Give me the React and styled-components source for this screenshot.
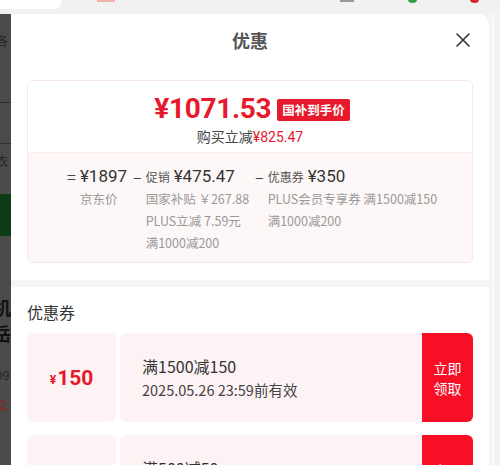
import styled, { createGlobalStyle } from "styled-components";

const RED = "#e8192c";

const GlobalStyle = createGlobalStyle`
  html, body {
    margin: 0;
    padding: 0;
    background: #f1f1f1;
    font-family: "Noto Sans CJK SC", "Noto Sans", sans-serif;
  }
`;

export default function App() {
  return (
    <>
      <GlobalStyle />
      <Page>
        <TopBar>
          <Pill />
          <TopMark $x={97} $w={18} $color="#f4b3a8" />
          <TopMark $x={340} $w={14} $color="#9a9a9a" />
          <TopDot $x={408} $color="#2f9e48" />
          <TopDot $x={470} $color="#d7262a" />
        </TopBar>
        <Body>
          <SideStrip>
            <SideText $h={88} $pad={20}>各</SideText>
            <SideLine />
            <SideSpacer $h={40} />
            <SideLine />
            <SideText $h={50} $pad={10}>衣</SideText>
            <GreenBlock />
            <SideSpacer $h={58} />
            <SideBig>机</SideBig>
            <SideBig>岳</SideBig>
            <SideText $h={50} $pad={22}>99</SideText>
            <SideText $h={30} $pad={2} $red>立</SideText>
          </SideStrip>
          <Modal>
            <Header>
              <Title>优惠</Title>
              <Close aria-label="关闭">
                <svg width="16" height="16" viewBox="0 0 16 16">
                  <path d="M2 2 L14 14 M14 2 L2 14" stroke="#333" strokeWidth="1.6" strokeLinecap="round" />
                </svg>
              </Close>
            </Header>
            <PriceCard>
              <PriceTop>
                <PriceRow>
                  <BigPrice>¥1071.53</BigPrice>
                  <Badge>国补到手价</Badge>
                </PriceRow>
                <SaveLine>
                  购买立减<span>¥825.47</span>
                </SaveLine>
              </PriceTop>
              <Breakdown>
                <Term>
                  <Op>=</Op>
                  <TermBody>
                    <TermHead>
                      <Amount>¥1897</Amount>
                    </TermHead>
                    <Sub>京东价</Sub>
                  </TermBody>
                </Term>
                <Term>
                  <Op>–</Op>
                  <TermBody>
                    <TermHead>
                      <Label>促销</Label>
                      <Amount>¥475.47</Amount>
                    </TermHead>
                    <Sub>国家补贴 ￥267.88</Sub>
                    <Sub>PLUS立减 7.59元</Sub>
                    <Sub>满1000减200</Sub>
                  </TermBody>
                </Term>
                <Term>
                  <Op>–</Op>
                  <TermBody>
                    <TermHead>
                      <Label>优惠券</Label>
                      <Amount>¥350</Amount>
                    </TermHead>
                    <Sub>PLUS会员专享券 满1500减150</Sub>
                    <Sub>满1000减200</Sub>
                  </TermBody>
                </Term>
              </Breakdown>
            </PriceCard>
            <Divider />
            <SectionTitle>优惠券</SectionTitle>
            <CouponList>
              <Coupon>
                <CouponValue>
                  <small>¥</small>150
                </CouponValue>
                <CouponInfo>
                  <CouponName>满1500减150</CouponName>
                  <CouponDate>2025.05.26 23:59前有效</CouponDate>
                </CouponInfo>
                <Claim>
                  立即
                  <br />
                  领取
                </Claim>
              </Coupon>
              <Coupon>
                <CouponValue>
                  <small>¥</small>50
                </CouponValue>
                <CouponInfo>
                  <CouponName>满500减50</CouponName>
                  <CouponDate>2025.05.26 23:59前有效</CouponDate>
                </CouponInfo>
                <Claim>
                  立即
                  <br />
                  领取
                </Claim>
              </Coupon>
            </CouponList>
          </Modal>
          <RightGutter>
            <GutterLine />
          </RightGutter>
        </Body>
      </Page>
    </>
  );
}

const Page = styled.div`
  width: 500px;
  height: 465px;
  overflow: hidden;
  display: flex;
  flex-direction: column;
  background: #f1f1f1;
`;

const TopBar = styled.div`
  position: relative;
  height: 14px;
  flex-shrink: 0;
  background: #f1f1f1;
`;

const Pill = styled.div`
  width: 62px;
  height: 9px;
  background: #fff;
  border-bottom-right-radius: 9px;
`;

const TopMark = styled.div`
  position: absolute;
  top: 0;
  left: ${(p) => p.$x}px;
  width: ${(p) => p.$w}px;
  height: 2px;
  background: ${(p) => p.$color};
`;

const TopDot = styled.div`
  position: absolute;
  top: -4px;
  left: ${(p) => p.$x}px;
  width: 9px;
  height: 7px;
  border-radius: 50%;
  background: ${(p) => p.$color};
`;

const Body = styled.div`
  flex: 1;
  display: flex;
  min-height: 0;
`;

const SideStrip = styled.div`
  width: 11px;
  flex-shrink: 0;
  background: #4b4b4b;
  overflow: hidden;
`;

const SideText = styled.div`
  height: ${(p) => p.$h}px;
  padding-top: ${(p) => p.$pad}px;
  box-sizing: border-box;
  font-size: 12px;
  line-height: 14px;
  color: ${(p) => (p.$red ? "#8a2020" : "#222")};
  margin-left: -4px;
  white-space: nowrap;
`;

const SideLine = styled.div`
  height: 1px;
  background: #3a2a2a;
`;

const SideSpacer = styled.div`
  height: ${(p) => p.$h}px;
`;

const GreenBlock = styled.div`
  height: 42px;
  background: #0c3b15;
`;

const SideBig = styled.div`
  height: 26px;
  font-size: 18px;
  line-height: 26px;
  font-weight: 700;
  color: #111;
  margin-left: -7px;
`;

const Modal = styled.div`
  width: 478px;
  flex-shrink: 0;
  background: #fff;
  border-top-right-radius: 10px;
  overflow: hidden;
`;

const Header = styled.div`
  position: relative;
  height: 52px;
  display: flex;
  align-items: center;
  justify-content: center;
`;

const Title = styled.div`
  font-size: 18px;
  font-weight: 700;
  color: #555;
  line-height: 24px;
`;

const Close = styled.div`
  position: absolute;
  right: 18px;
  top: 18px;
  width: 16px;
  height: 16px;
  display: flex;
`;

const PriceCard = styled.div`
  margin: 14px 16px 0;
  border: 1px solid #f6e6e8;
  border-radius: 6px;
  overflow: hidden;
`;

const PriceTop = styled.div`
  height: 71px;
  background: #fff;
  display: flex;
  flex-direction: column;
  align-items: center;
  padding-top: 12px;
  box-sizing: border-box;
`;

const PriceRow = styled.div`
  display: flex;
  align-items: center;
  gap: 6px;
  height: 32px;
  padding-left: 4px;
`;

const BigPrice = styled.div`
  font-family: Roboto, "Noto Sans CJK SC", sans-serif;
  font-size: 28px;
  font-weight: 700;
  color: ${RED};
  letter-spacing: -0.3px;
  line-height: 32px;
`;

const Badge = styled.div`
  background: ${RED};
  color: #fff;
  font-size: 12.5px;
  font-weight: 700;
  line-height: 22px;
  padding: 0 5px;
  border-radius: 2px;
  margin-top: 2px;
`;

const SaveLine = styled.div`
  font-size: 14px;
  color: #444;
  line-height: 20px;
  margin-top: 1px;
  span {
    font-family: Roboto, "Noto Sans CJK SC", sans-serif;
    color: ${RED};
  }
`;

const Breakdown = styled.div`
  background: #fdf7f7;
  border-top: 1px solid #fbeeee;
  height: 110px;
  box-sizing: border-box;
  padding: 11px 0 0 39px;
  display: flex;
  gap: 6px;
`;

const Term = styled.div`
  display: flex;
  align-items: flex-start;
  gap: 4px;
`;

const Op = styled.div`
  font-size: 16px;
  line-height: 24px;
  color: #444;
`;

const TermBody = styled.div`
  display: flex;
  flex-direction: column;
`;

const TermHead = styled.div`
  display: flex;
  align-items: baseline;
  gap: 4px;
  height: 24px;
`;

const Label = styled.span`
  font-size: 12px;
  color: #555;
`;

const Amount = styled.span`
  font-family: Roboto, "Noto Sans CJK SC", sans-serif;
  font-size: 17px;
  color: #333;
  line-height: 24px;
`;

const Sub = styled.div`
  font-size: 12.5px;
  line-height: 22px;
  color: #999;
  white-space: nowrap;
`;

const Divider = styled.div`
  height: 7px;
  background: #f5f5f8;
  margin-top: 17px;
`;

const SectionTitle = styled.div`
  font-size: 16px;
  color: #333;
  padding: 14px 16px 0;
  line-height: 22px;
  height: 46px;
  box-sizing: border-box;
`;

const CouponList = styled.div`
  display: flex;
  flex-direction: column;
  gap: 13px;
  padding: 0 16px;
`;

const Coupon = styled.div`
  display: flex;
  height: 89px;
  flex-shrink: 0;
`;

const CouponValue = styled.div`
  width: 89px;
  background: #fdf3f4;
  border-radius: 6px;
  display: flex;
  align-items: center;
  justify-content: center;
  color: ${RED};
  font-family: Roboto, "Noto Sans CJK SC", sans-serif;
  font-size: 21px;
  font-weight: 700;
  small {
    font-size: 12px;
    margin-top: 5px;
    margin-right: 1px;
  }
`;

const CouponInfo = styled.div`
  flex: 1;
  margin-left: 4px;
  background: #fdf3f4;
  border-radius: 6px 0 0 6px;
  display: flex;
  flex-direction: column;
  justify-content: center;
  padding-left: 22px;
  gap: 3px;
`;

const CouponName = styled.div`
  font-size: 16px;
  color: #333;
  line-height: 22px;
`;

const CouponDate = styled.div`
  font-size: 14.5px;
  color: #444;
  line-height: 20px;
`;

const Claim = styled.div`
  width: 51px;
  background: #f70f25;
  border-radius: 0 6px 6px 0;
  color: #fff;
  font-size: 14px;
  line-height: 20px;
  display: flex;
  align-items: center;
  justify-content: center;
  text-align: center;
`;

const RightGutter = styled.div`
  flex: 1;
  background: #f3f3f3;
  display: flex;
  padding-left: 3px;
`;

const GutterLine = styled.div`
  width: 2px;
  background: #fbfbfb;
`;
